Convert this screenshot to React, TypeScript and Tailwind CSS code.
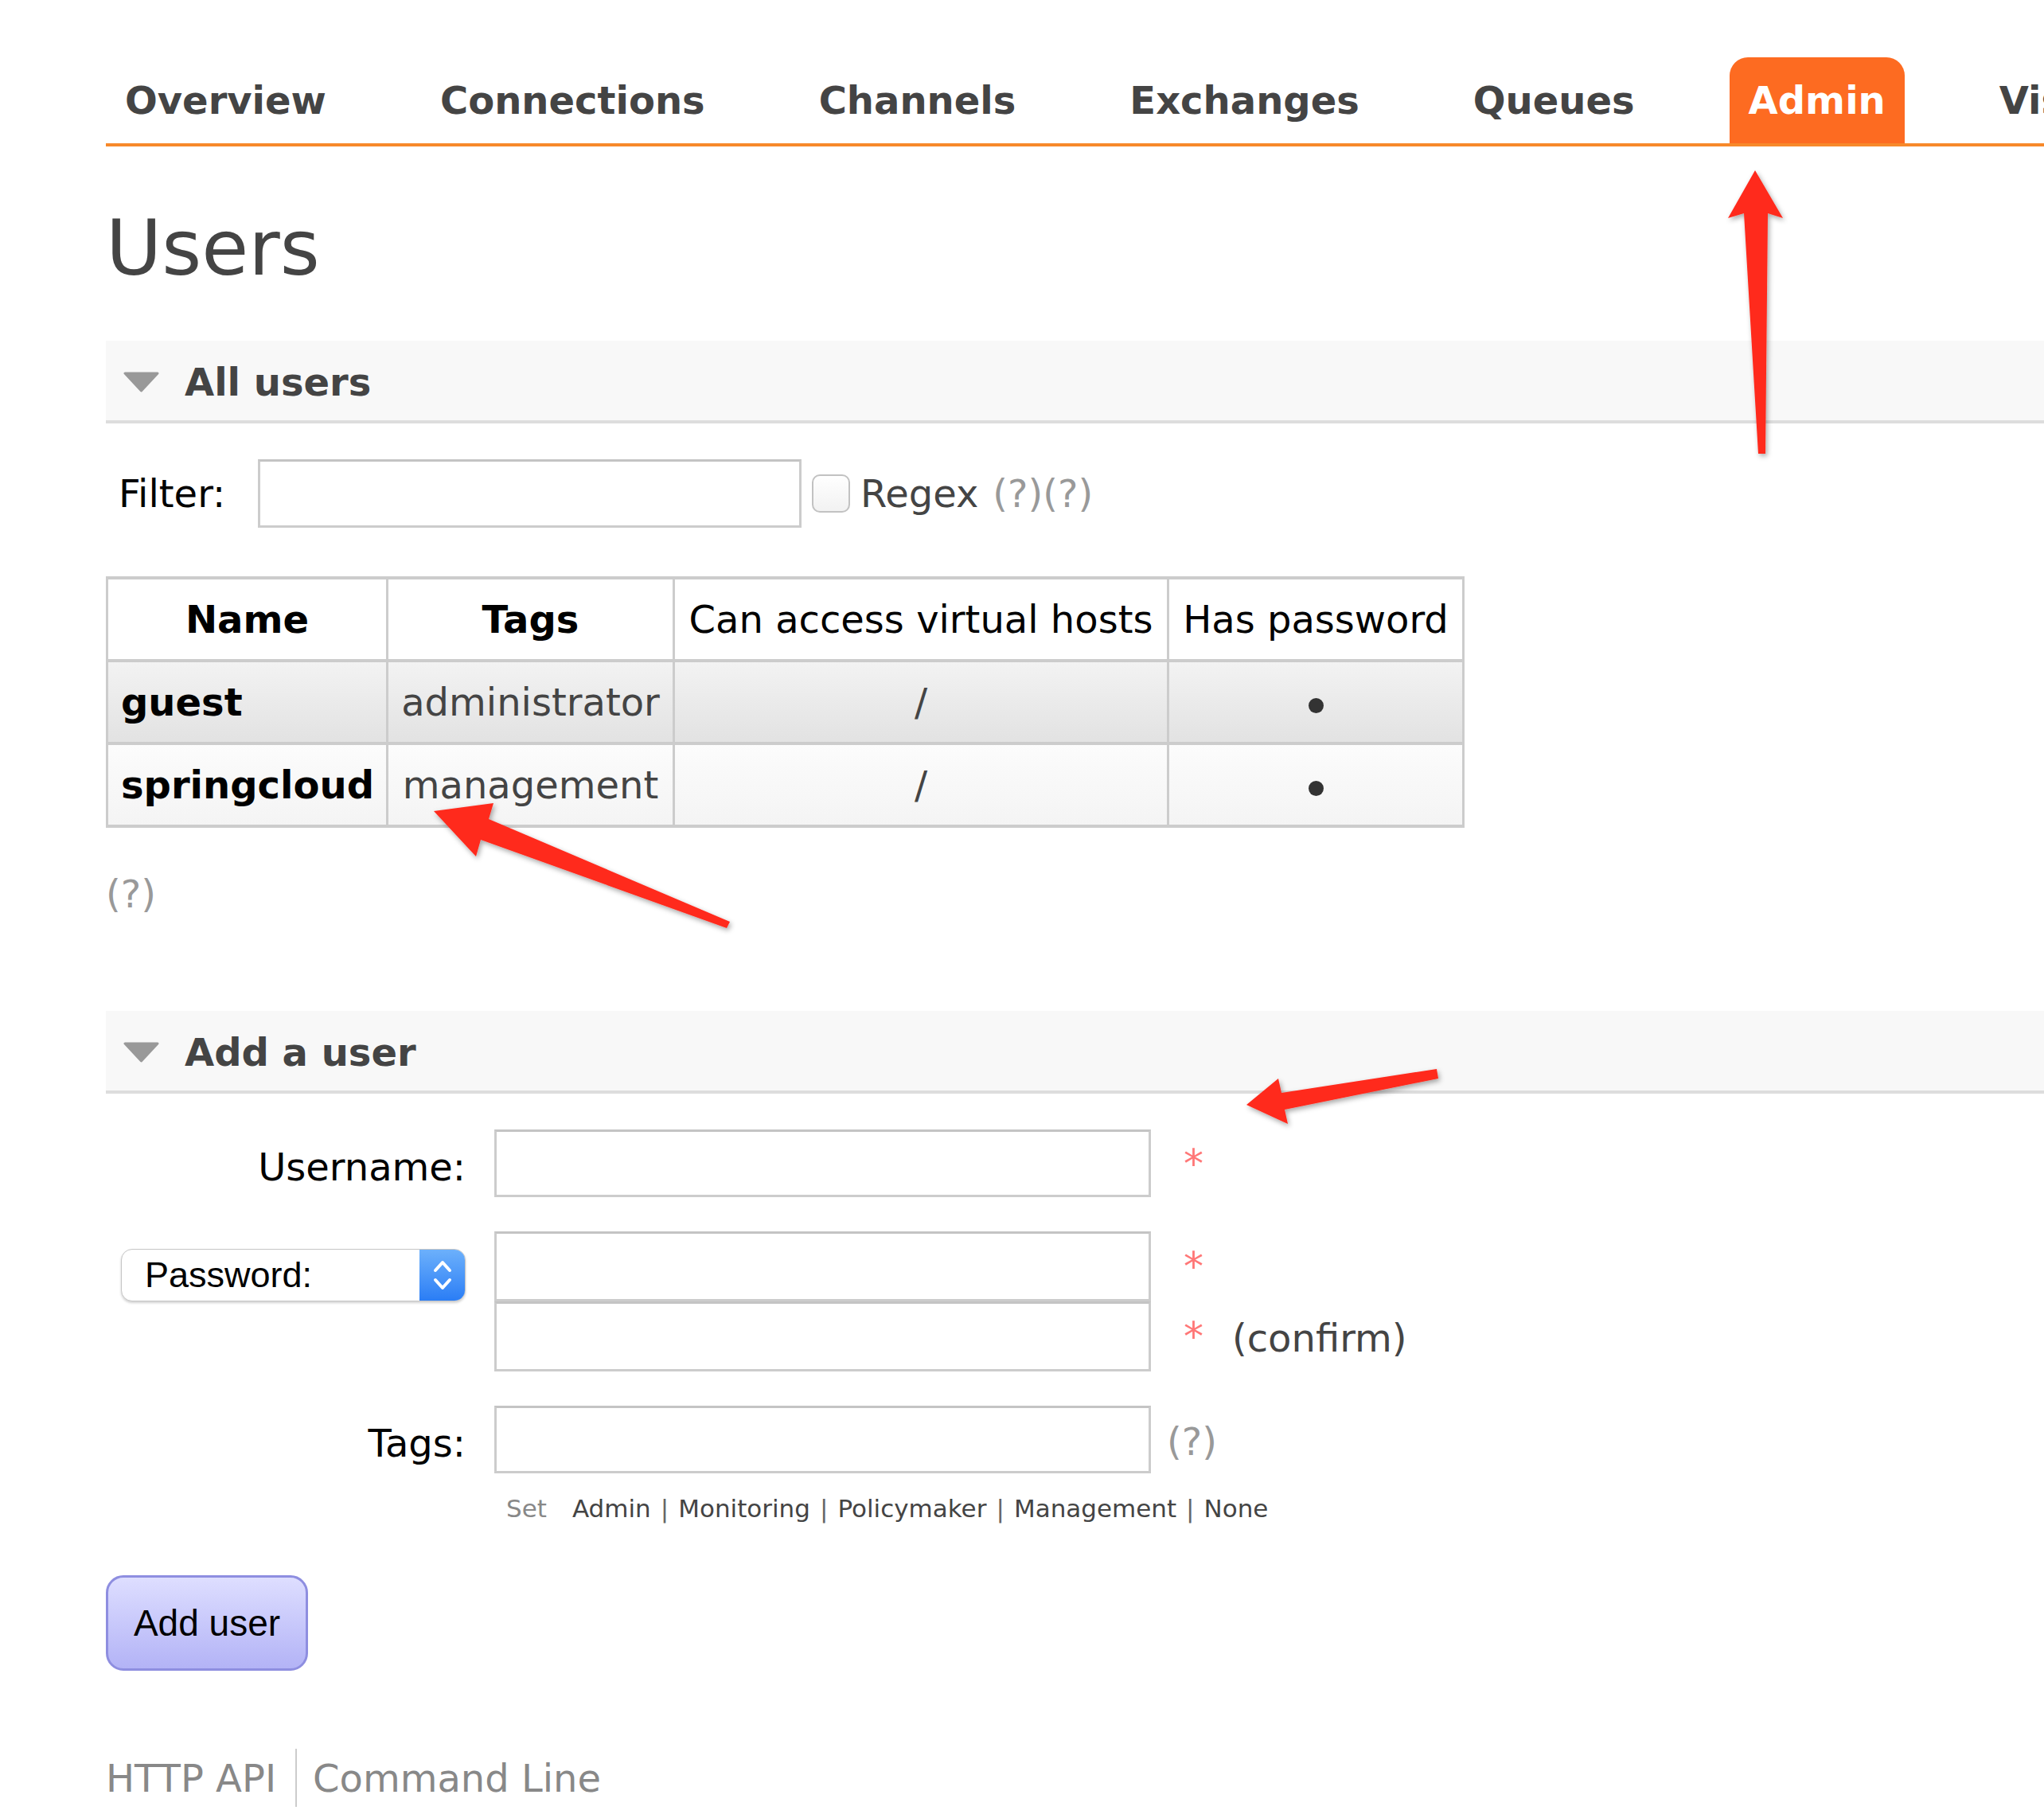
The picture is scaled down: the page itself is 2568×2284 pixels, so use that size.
import React from 'react'

const tabs = ['Overview','Connections','Channels','Exchanges','Queues','Admin','Visualiser']
const tagLinks = ['Admin','Monitoring','Policymaker','Management','None']

const inputCls = 'block bg-white border-[3px] border-[#ccc] border-t-[#c4c4c4]'

function Triangle() {
  return (
    <svg width="45" height="26" viewBox="0 0 45 26" className="shrink-0">
      <polygon points="2,2 43,2 22.5,24" fill="#999" stroke="#999" strokeWidth="3" strokeLinejoin="round" />
    </svg>
  )
}

function SectionHead({title}:{title:string}) {
  return (
    <div className="flex h-[104px] items-center gap-[32px] border-b-[4px] border-[#ddd] bg-[#f8f8f8] pl-[22px] pt-[3px]">
      <Triangle />
      <h2 className="text-[48px] font-bold text-[#444]">{title}</h2>
    </div>
  )
}

function Star() {
  return <span className="ml-[41px] text-[50px] leading-none text-[#f77]">*</span>
}

function Arrows() {
  return (
    <svg className="pointer-events-none absolute left-0 top-0" width="2568" height="2284">
      <defs>
        <filter id="shadow" x="-20%" y="-20%" width="140%" height="140%">
          <feDropShadow dx="2" dy="3" stdDeviation="3" floodColor="#000" floodOpacity="0.35" />
        </filter>
      </defs>
      <g fill="#ff2a1e" filter="url(#shadow)">
        <polygon points="2205,214 2240,274 2221,268 2218,570 2209,570 2191,268 2171,274" />
        <polygon points="545,1019 620,1009 614,1029 917,1158 913,1166 604,1055 598,1076" />
        <polygon points="1566,1388 1606,1355 1610,1373 1805,1343 1807,1355 1614,1394 1618,1412" />
      </g>
    </svg>
  )
}

function App() {

  const users = [
    {name:'guest', tags:'administrator', bg:'bg-gradient-to-b from-[#f3f3f3] to-[#e2e2e2]'},
    {name:'springcloud', tags:'management', bg:'bg-gradient-to-b from-[#fcfcfc] to-[#f4f4f4]'},
  ]

  return (
    <div className="relative h-[2284px] w-[2568px] overflow-hidden bg-white font-['DejaVu_Sans',Verdana,sans-serif] text-[48px] text-[#444]">
      <div className="pl-[133px]">

        <ul className="mt-[72px] flex gap-[95px] whitespace-nowrap border-b-[4px] border-[#f7892a]">
          {tabs.map(t => (
            <li
              key={t}
              className={t === 'Admin'
                ? 'flex h-[108px] shrink-0 items-center rounded-t-[23px] bg-[#fd6b21] px-[24px] text-[48px] font-bold text-white'
                : 'flex h-[108px] shrink-0 items-center px-[24px] text-[48px] font-bold text-[#444]'}
            >
              {t}
            </li>
          ))}
        </ul>

        <h1 className="mt-[80px] text-[96px] leading-[96px] text-[#444]">Users</h1>

        <div className="mt-[68px]">
          <SectionHead title="All users" />

          <div className="mt-[45px] flex h-[86px] items-center">
            <label className="w-[191px] pl-[16px] text-black">Filter:</label>
            <input type="text" className={inputCls + ' h-[86px] w-[683px]'} />
            <span className="ml-[13px] h-[48px] w-[48px] rounded-[10px] border-[2px] border-[#c2c2c2] bg-gradient-to-b from-white to-[#f2f2f2]" />
            <span className="ml-[13px]">Regex</span>
            <span className="ml-[18px] text-[#999]">(?)(?)</span>
          </div>

          <table className="mt-[61px] w-[1707px] border-collapse">
            <thead>
              <tr className="h-[104px] bg-white">
                <th className="w-[352px] border-x-[3px] border-y-[4px] border-[#ccc] font-bold text-black">Name</th>
                <th className="w-[360px] border-x-[3px] border-y-[4px] border-[#ccc] font-bold text-black">Tags</th>
                <th className="w-[621px] border-x-[3px] border-y-[4px] border-[#ccc] font-normal text-black">Can access virtual hosts</th>
                <th className="border-x-[3px] border-y-[4px] border-[#ccc] font-normal text-black">Has password</th>
              </tr>
            </thead>
            <tbody>
              {users.map(u => (
                <tr key={u.name} className={'h-[104px] ' + u.bg}>
                  <td className="border-x-[3px] border-y-[4px] border-[#ccc] pl-[16px] font-bold text-black">{u.name}</td>
                  <td className="border-x-[3px] border-y-[4px] border-[#ccc] text-center">{u.tags}</td>
                  <td className="border-x-[3px] border-y-[4px] border-[#ccc] text-center">/</td>
                  <td className="border-x-[3px] border-y-[4px] border-[#ccc] text-center">
                    <span className="inline-block h-[19px] w-[19px] rounded-full bg-[#333] align-middle" />
                  </td>
                </tr>
              ))}
            </tbody>
          </table>

          <p className="mt-[55px] leading-[56px] text-[#999]">(?)</p>
        </div>

        <div className="mt-[119px]">
          <SectionHead title="Add a user" />

          <div className="mt-[45px] flex h-[85px] items-center">
            <label className="w-[452px] pt-[8px] text-right text-black">Username:</label>
            <input type="text" className={inputCls + ' ml-[36px] h-[85px] w-[825px]'} />
            <Star />
          </div>

          <div className="mt-[43px] flex">
            <div className="w-[452px] pl-[19px] pt-[22px]">
              <div className="flex h-[66px] overflow-hidden rounded-[14px] border border-[#c6c6c6] bg-white font-['Liberation_Sans',Arial,sans-serif] text-[45px] text-black shadow-[0_2px_3px_rgba(0,0,0,0.18)]">
                <span className="flex flex-1 items-center pl-[29px]">Password:</span>
                <span className="flex w-[57px] items-center justify-center bg-gradient-to-b from-[#6cb0fb] to-[#2a7df5]">
                  <svg width="26" height="44" viewBox="0 0 26 44" fill="none" stroke="white" strokeWidth="4" strokeLinecap="round" strokeLinejoin="round">
                    <polyline points="4,16 13,6 22,16" />
                    <polyline points="4,28 13,38 22,28" />
                  </svg>
                </span>
              </div>
            </div>
            <div className="ml-[36px]">
              <div className="flex h-[88px] items-center">
                <input type="password" className={inputCls + ' h-[88px] w-[825px]'} />
                <Star />
              </div>
              <div className="flex h-[88px] items-center">
                <input type="password" className={inputCls + ' h-[88px] w-[825px]'} />
                <Star />
                <span className="ml-[36px] pt-[4px]">(confirm)</span>
              </div>
            </div>
          </div>

          <div className="mt-[43px] flex h-[85px] items-center">
            <label className="w-[452px] pt-[8px] text-right text-black">Tags:</label>
            <input type="text" className={inputCls + ' ml-[36px] h-[85px] w-[825px]'} />
            <span className="ml-[20px] pt-[4px] text-[#999]">(?)</span>
          </div>

          <p className="mt-[24px] flex pl-[503px] text-[31px] leading-[40px] text-[#444]">
            <span className="mr-[32px] text-[#888]">Set</span>
            {tagLinks.map((t,i) => (
              <span key={t} className="flex">
                {i > 0 && <span className="mx-[12px] text-[#666]">|</span>}
                <span>{t}</span>
              </span>
            ))}
          </p>

          <button className="mt-[64px] h-[120px] w-[254px] rounded-[22px] border-[3px] border-[#8e8ee0] bg-gradient-to-b from-[#dedeff] to-[#b3b3f6] font-['Liberation_Sans',Arial,sans-serif] text-[46px] text-black">
            Add user
          </button>
        </div>

        <div className="mt-[98px] flex h-[73px] items-center text-[#888]">
          <span className="pr-[24px]">HTTP API</span>
          <span className="h-[73px] w-[2px] bg-[#ccc]" />
          <span className="pl-[20px]">Command Line</span>
        </div>

      </div>
      <Arrows />
    </div>
  )
}

export default App
